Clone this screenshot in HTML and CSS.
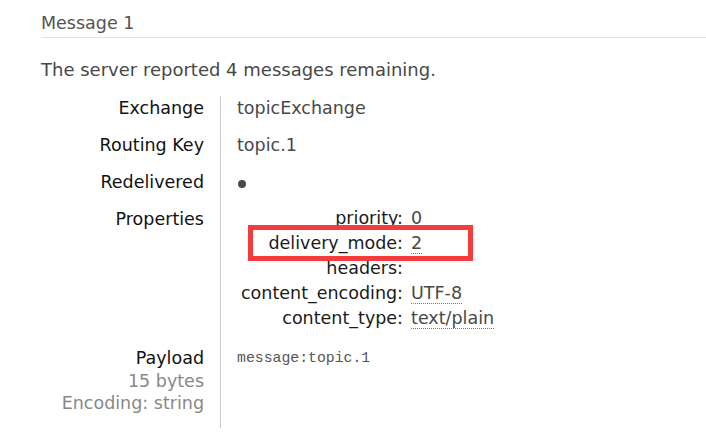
FILE: index.html
```html
<!DOCTYPE html>
<html>
<head>
<meta charset="utf-8">
<link rel="stylesheet" href="styles.css">
</head>
<body>
<div class="page">
  <h2 class="title">Message 1</h2>
  <p class="summary">The server reported 4 messages remaining.</p>
  <table class="facts">
    <tr>
      <th>Exchange</th>
      <td>topicExchange</td>
    </tr>
    <tr>
      <th>Routing Key</th>
      <td>topic.1</td>
    </tr>
    <tr>
      <th>Redelivered</th>
      <td><span class="dot"></span></td>
    </tr>
    <tr>
      <th>Properties</th>
      <td class="props-cell">
        <table class="props">
          <tr><th>priority:</th><td><abbr>0</abbr></td></tr>
          <tr class="marked"><th>delivery_mode:</th><td><abbr>2</abbr><span class="highlight"></span></td></tr>
          <tr><th>headers:</th><td></td></tr>
          <tr><th>content_encoding:</th><td><abbr>UTF-8</abbr></td></tr>
          <tr><th>content_type:</th><td><abbr>text/plain</abbr></td></tr>
        </table>
      </td>
    </tr>
    <tr class="payload-row">
      <th>Payload<br><span class="sub">15 bytes</span><br><span class="sub">Encoding: string</span></th>
      <td><pre class="payload">message:topic.1</pre></td>
    </tr>
  </table>
</div>
</body>
</html>
```
FILE: styles.css
```css
html, body {
  margin: 0;
  padding: 0;
  background: #fff;
}
body {
  font-family: "DejaVu Sans", Verdana, sans-serif;
  font-size: 17.5px;
  color: #484848;
}
.page {
  padding: 11px 0 0 41px;
}
.title {
  margin: 0;
  font-size: 17.5px;
  font-weight: normal;
  line-height: 24px;
  color: #555;
  padding-bottom: 2px;
  border-bottom: 1px solid #e2e2e2;
}
.summary {
  margin: 20px 0 0 0;
  font-size: 18px;
  line-height: 24px;
}
.facts {
  border-collapse: collapse;
  margin-top: 14px;
}
.facts > tbody > tr > th {
  width: 163px;
  text-align: right;
  font-weight: normal;
  color: #111;
  vertical-align: top;
  padding: 0 16px 13px 0;
  line-height: 24px;
}
.facts > tbody > tr > td {
  border-left: 1px solid #ccc;
  padding: 0 0 13px 16px;
  line-height: 24px;
  vertical-align: top;
}
.dot {
  display: inline-block;
  width: 8px;
  height: 8px;
  border-radius: 50%;
  background: #4a4a4a;
  margin-left: 1px;
  vertical-align: 0;
}
.props {
  border-collapse: collapse;
  margin-top: -1px;
}
.props th {
  text-align: right;
  font-weight: normal;
  color: #1a1a1a;
  padding: 0 0 0 4px;
  line-height: 25px;
  white-space: nowrap;
}
.props td {
  padding: 0 0 0 8px;
  line-height: 25px;
  position: relative;
  white-space: nowrap;
}
abbr {
  text-decoration: none;
  border-bottom: 1px dotted #777;
}
.highlight {
  position: absolute;
  left: -155px;
  top: -6px;
  width: 215px;
  height: 26px;
  border: 5px solid #f53b3b;
}
.facts > tbody > tr.payload-row > th,
.facts > tbody > tr.payload-row > td {
  line-height: 22.5px;
  padding-top: 3px;
}
.sub {
  color: #888;
}
.payload {
  margin: 0;
  font-family: "Liberation Mono", monospace;
  font-size: 14.8px;
  color: #555;
  line-height: 22px;
}
```
